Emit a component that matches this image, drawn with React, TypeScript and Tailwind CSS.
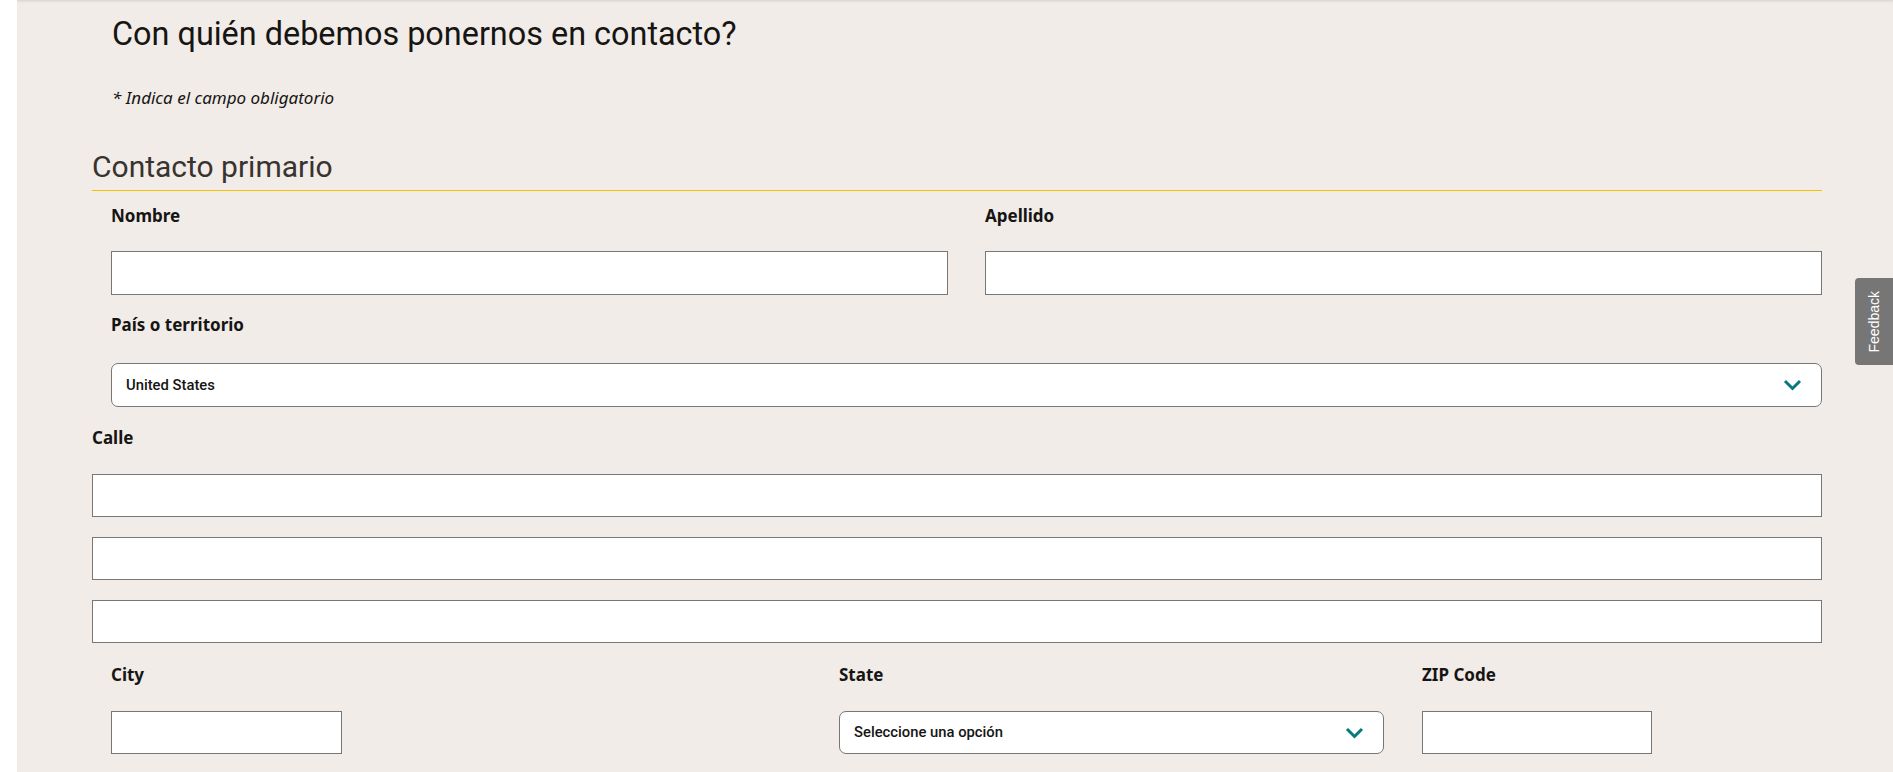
import React from "react";

function Chevron() {
  return (
    <svg width="19" height="12" viewBox="0 0 19 12" fill="none">
      <path d="M2 2 L9.5 9.5 L17 2" stroke="#047b7c" strokeWidth="3" />
    </svg>
  );
}

function Label({ children, className = "" }: { children: React.ReactNode; className?: string }) {
  return (
    <label className={`block font-['Noto_Sans',sans-serif] text-[17px] leading-[24px] font-bold text-[#161513] ${className}`}>
      {children}
    </label>
  );
}

// height is passed in by the caller
function TextBox({ className = "" }: { className?: string }) {
  return <input className={`block border border-[#777] bg-white outline-none ${className}`} />;
}

function SelectBox({ value, className = "" }: { value: string; className?: string }) {
  return (
    <div
      className={`flex items-center justify-between rounded-[7px] border border-[#777] bg-white pl-[14px] pr-[19px] ${className}`}
    >
      <span className="font-['Roboto',sans-serif] text-[14.8px] font-medium text-[#161513]">{value}</span>
      <Chevron />
    </div>
  );
}

export default function App() {
  return (
    <div className="flex min-h-screen bg-white">
      <div className="w-[17px] shrink-0" />
      <main className="min-h-screen flex-1 bg-[#f1ece8] shadow-[inset_0_3px_3px_-2px_rgba(0,0,0,0.12)]">
        <div className="ml-[75px] w-[1730px] pb-[16px]">
          <h1 className="pl-[20px] pt-[14px] font-['Roboto',sans-serif] text-[32.4px] leading-[40px] text-[#161513]">
            Con quién debemos ponernos en contacto?
          </h1>
          <p className="mt-[32px] pl-[20px] font-['Noto_Sans',sans-serif] text-[17px] leading-[24px] italic text-[#161513]">
            * Indica el campo obligatorio
          </p>

          <h2 className="mt-[39px] border-b border-[#f2c200] pb-[5px] font-['Roboto',sans-serif] text-[30px] leading-[36px] text-[#38332f]">
            Contacto primario
          </h2>

          {/* nombre / apellido */}
          <div className="mt-[13px] grid grid-cols-2 gap-x-[37px] pl-[19px]">
            <div>
              <Label>Nombre</Label>
              <TextBox className="mt-[23px] h-[44px] w-full" />
            </div>
            <div>
              <Label>Apellido</Label>
              <TextBox className="mt-[23px] h-[44px] w-full" />
            </div>
          </div>

          {/* pais */}
          <div className="mt-[18px] pl-[19px]">
            <Label>País o territorio</Label>
            <SelectBox value="United States" className="mt-[26px] h-[44px] w-full" />
          </div>

          {/* calle */}
          <div className="mt-[19px]">
            <Label>Calle</Label>
            <div className="mt-[24px] flex flex-col gap-[20px]">
              <TextBox className="h-[43px] w-full" />
              <TextBox className="h-[43px] w-full" />
              <TextBox className="h-[43px] w-full" />
            </div>
          </div>

          {/* city / state / zip */}
          <div className="mt-[20px] flex pl-[19px]">
            <div className="w-[728px]">
              <Label>City</Label>
              <TextBox className="mt-[24px] h-[43px] w-[231px]" />
            </div>
            <div className="w-[583px]">
              <Label>State</Label>
              <SelectBox value="Seleccione una opción" className="mt-[24px] h-[43px] w-[545px]" />
            </div>
            <div className="w-[230px]">
              <Label>ZIP Code</Label>
              <TextBox className="mt-[24px] h-[43px] w-[230px]" />
            </div>
          </div>
        </div>
      </main>

      <div className="fixed right-0 top-[278px] flex h-[87px] w-[38px] items-center justify-center rounded-l-[4px] bg-[#767676]">
        <span className="rotate-180 font-['Liberation_Sans',sans-serif] text-[14px] text-white [writing-mode:vertical-rl]">
          Feedback
        </span>
      </div>
    </div>
  );
}
